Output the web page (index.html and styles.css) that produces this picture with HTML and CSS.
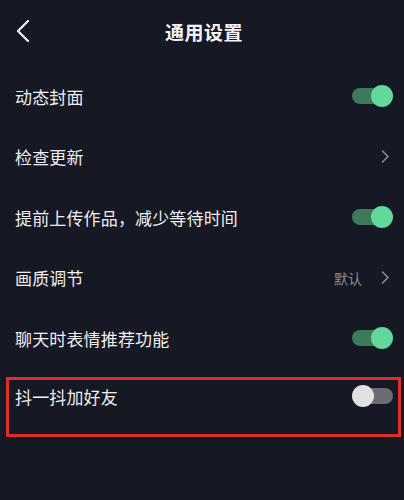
FILE: index.html
```html
<!DOCTYPE html>
<html lang="zh-CN">
<head>
<meta charset="utf-8">
<link rel="stylesheet" href="styles.css">
</head>
<body>
<div class="page">
  <header class="header">
    <svg class="back" width="14" height="22" viewBox="0 0 14 22"><path d="M12 1 L2 11 L12 21" fill="none" stroke="#f2f2f4" stroke-width="2.2" stroke-linecap="round" stroke-linejoin="round"/></svg>
    <h1 class="title">通用设置</h1>
  </header>
  <ul class="list">
    <li class="row"><span class="label">动态封面</span><span class="switch on"><span class="track"></span><span class="knob"></span></span></li>
    <li class="row"><span class="label">检查更新</span><span class="extra"><svg class="chev" width="9" height="13" viewBox="0 0 9 13"><path d="M1.5 1 L7 6.5 L1.5 12" fill="none" stroke="#8a8b92" stroke-width="1.6" stroke-linecap="round" stroke-linejoin="round"/></svg></span></li>
    <li class="row"><span class="label">提前上传作品，减少等待时间</span><span class="switch on"><span class="track"></span><span class="knob"></span></span></li>
    <li class="row"><span class="label">画质调节</span><span class="extra"><span class="value">默认</span><svg class="chev" width="9" height="13" viewBox="0 0 9 13"><path d="M1.5 1 L7 6.5 L1.5 12" fill="none" stroke="#8a8b92" stroke-width="1.6" stroke-linecap="round" stroke-linejoin="round"/></svg></span></li>
    <li class="row"><span class="label">聊天时表情推荐功能</span><span class="switch on"><span class="track"></span><span class="knob"></span></span></li>
    <li class="row highlighted"><span class="label">抖一抖加好友</span><span class="switch off"><span class="track"></span><span class="knob"></span></span><span class="mark"></span></li>
  </ul>
</div>
</body>
</html>
```

FILE: styles.css
```css
html, body {
  margin: 0;
  padding: 0;
  background: #161823;
}
body {
  font-family: "Noto Sans CJK SC", "Noto Sans", sans-serif;
  color: #efeff1;
  width: 404px;
  height: 500px;
  overflow: hidden;
}
.page {
  display: flex;
  flex-direction: column;
}
.header {
  position: relative;
  height: 62px;
  display: flex;
  align-items: center;
  justify-content: center;
}
.back {
  position: absolute;
  left: 16px;
  top: 20px;
}
.title {
  margin: 0 0 0 4px;
  font-size: 19px;
  font-weight: 700;
  letter-spacing: 0.5px;
  color: #f4f4f6;
}
.list {
  list-style: none;
  margin: 4px 0 0;
  padding: 0;
}
.row {
  position: relative;
  height: 60.5px;
  display: flex;
  align-items: center;
  justify-content: space-between;
  padding: 0 11px 0 15px;
}
.label {
  font-size: 17px;
  line-height: 1;
  letter-spacing: 0.15px;
}
.extra {
  display: flex;
  align-items: center;
  gap: 19px;
  padding-right: 3px;
}
.value {
  font-size: 14px;
  color: #8a8b92;
}
.chev {
  display: block;
}
.switch {
  position: relative;
  width: 41px;
  height: 22px;
  display: block;
}
.track {
  position: absolute;
  top: 3px;
  height: 16px;
  border-radius: 8px;
}
.knob {
  position: absolute;
  top: 0;
  width: 22px;
  height: 22px;
  border-radius: 50%;
}
.on .track {
  left: 0;
  width: 36px;
  background: #3d7a5a;
}
.on .knob {
  right: 0;
  background: #62d99b;
}
.off .track {
  right: 0;
  width: 36px;
  background: #6b6c74;
}
.off .knob {
  left: 0;
  background: #e2e2e5;
}
.highlighted .switch {
  transform: translateY(-3px);
}
.highlighted .label {
  transform: translateY(-2px);
}
.mark {
  position: absolute;
  left: 6px;
  right: 3px;
  top: 8px;
  height: 60px;
  border: 3px solid #dd2e2a;
  box-sizing: border-box;
}
```
